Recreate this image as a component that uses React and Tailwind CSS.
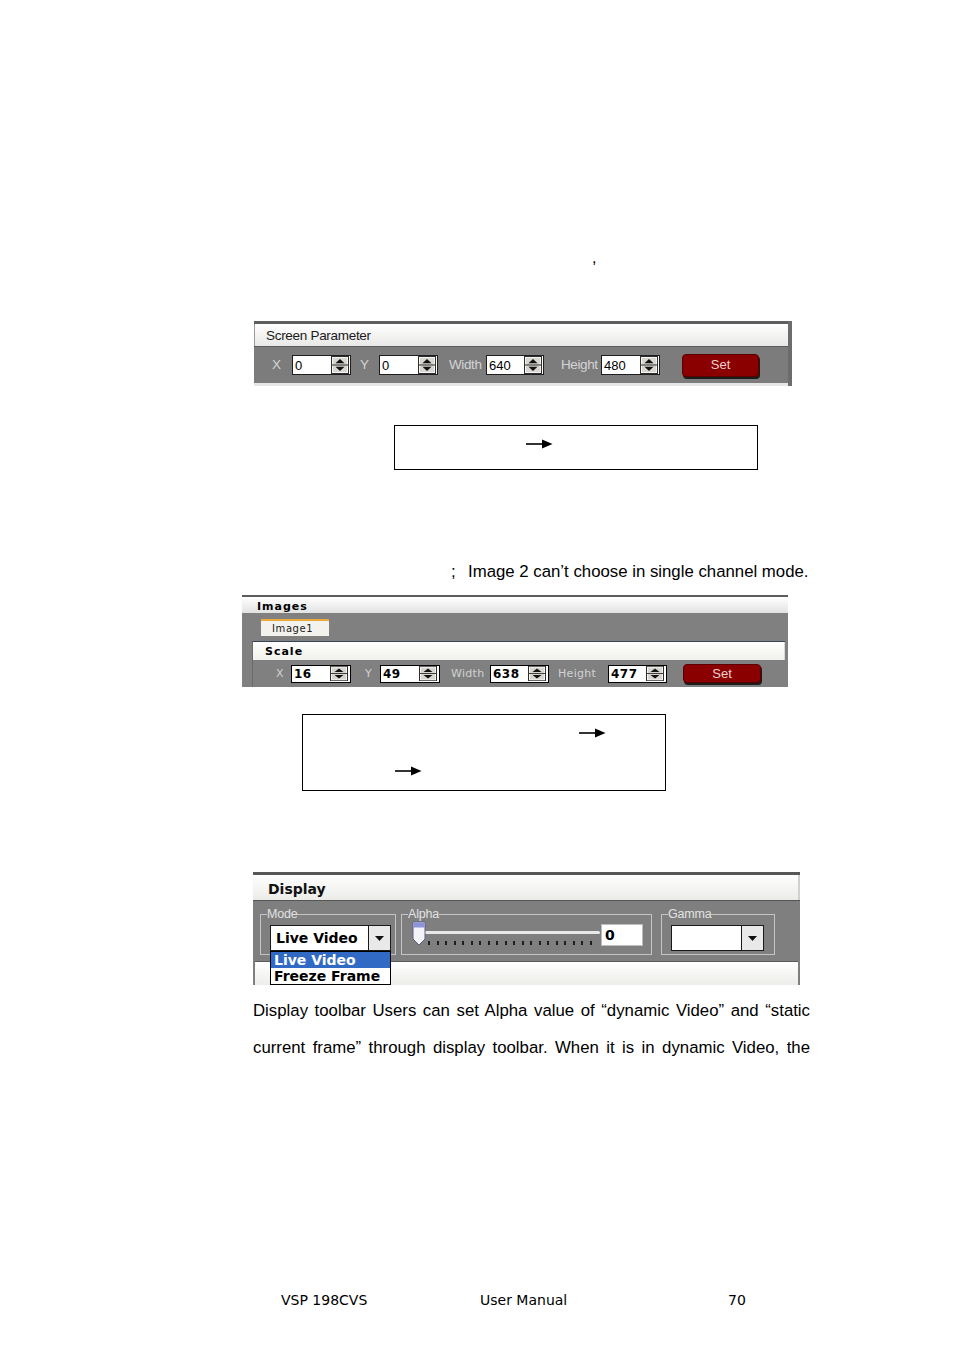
import React from "react";

const sans = "font-['Liberation_Sans',Arial,sans-serif]";
const verd = "font-['DejaVu_Sans',Verdana,sans-serif]";

function Spin({ h = 18 }) {
  return (
    <svg width="18" height={h} viewBox="0 0 18 18" preserveAspectRatio="none" className="shrink-0">
      <rect x="0.5" y="0.5" width="17" height="17" fill="#d9d6d0" stroke="#2e2e2e" />
      <rect x="1.5" y="1.5" width="15" height="15" fill="none" stroke="#f4f4f4" />
      <line x1="1" y1="9" x2="17" y2="9" stroke="#2e2e2e" />
      <path d="M4.5 7.2 L9 3 L13.5 7.2 Z" fill="#111" />
      <path d="M4.5 10.8 L13.5 10.8 L9 15 Z" fill="#111" />
    </svg>
  );
}

function Arrow() {
  return (
    <svg width="27" height="10" viewBox="0 0 27 10" className="block">
      <line x1="0" y1="5" x2="17" y2="5" stroke="#000" strokeWidth="1.6" />
      <path d="M16 0.5 L26.5 5 L16 9.5 Z" fill="#000" />
    </svg>
  );
}

function Caret() {
  return (
    <svg width="9" height="5" viewBox="0 0 9 5">
      <path d="M0 0 L9 0 L4.5 5 Z" fill="#111" />
    </svg>
  );
}

// row in the "Screen Parameter" bar
function Field1({ label, ml, lw, value, w }) {
  return (
    <>
      <span style={{ marginLeft: ml, width: lw }} className={`${sans} text-[13.5px] text-[#d4d4d4] shrink-0 leading-none tracking-[-0.4px]`}>
        {label}
      </span>
      <div style={{ width: w }} className="h-[20px] bg-white border border-[#1e1e1e] flex items-center justify-between pl-[2px] pr-[1px] shrink-0">
        <span className={`${sans} text-[13px] leading-none text-black`}>{value}</span>
        <Spin />
      </div>
    </>
  );
}

// row in the "Scale" bar
function Field2({ label, ml, lw, value, w }) {
  return (
    <>
      <span style={{ marginLeft: ml, width: lw }} className={`${verd} text-[11px] text-[#d2d2d2] shrink-0 leading-none tracking-[0.3px]`}>
        {label}
      </span>
      <div style={{ width: w }} className="h-[18px] bg-white border border-black flex items-center justify-between pl-[2px] pr-[2px] shrink-0">
        <span className={`${verd} text-[12px] font-bold leading-none text-black tracking-[0.5px]`}>{value}</span>
        <Spin h={15} />
      </div>
    </>
  );
}

function SetButton({ ml, w, h }) {
  return (
    <div
      style={{ marginLeft: ml, width: w, height: h }}
      className={`${sans} shrink-0 rounded-[4px] bg-[#8a0000] border border-[#5a0000] shadow-[1px_2px_0_#1c1c1c] flex items-center justify-center text-[13px] text-[#ecd2d2]`}
    >
      Set
    </div>
  );
}

function ScreenParameter() {
  return (
    <div className="ml-[254px] w-[538px] h-[65px] flex bg-[#7b7b7b]">
      <div className="w-[534px] flex flex-col">
        <div className="h-[3px] bg-[#5e5e5e]" />
        <div className="h-[22px] bg-gradient-to-b from-[#ffffff] to-[#e8e8e6] border-l border-[#9a9a9a] flex items-center pl-[11px] pt-[3px]">
          <span className={`${sans} text-[13.5px] text-[#1a1a1a] tracking-[-0.3px]`}>Screen Parameter</span>
        </div>
        <div className="h-[37px] border-t border-[#5a5a5a] bg-[#7c7c7c] flex items-center">
          <Field1 label="X" ml={18} lw={20} value="0" w={59} />
          <Field1 label="Y" ml={9} lw={19} value="0" w={59} />
          <Field1 label="Width" ml={11} lw={37} value="640" w={58} />
          <Field1 label="Height" ml={17} lw={40} value="480" w={59} />
          <SetButton ml={22} w={77} h={23} />
        </div>
        <div className="h-[3px] bg-[#e6e6e6]" />
      </div>
      <div className="w-[4px] bg-[#6c6c6c]" />
    </div>
  );
}

function ImagesPanel() {
  return (
    <div className="ml-[242px] w-[546px] h-[92px] bg-[#808080] flex flex-col overflow-hidden">
      <div className="h-[2px] bg-[#5c5c5c]" />
      <div className="h-[16px] bg-gradient-to-b from-[#ffffff] to-[#e2e2e2] flex items-center pl-[15px] pt-[2px]">
        <span className={`${verd} text-[11px] font-bold tracking-[1px] text-black leading-none`}>Images</span>
      </div>
      <div className="h-[6px]" />
      <div className="ml-[19px] w-[68px] h-[17px] bg-[#f3f2ec] border-t-2 border-[#eaa93a] flex items-center pl-[11px]">
        <span className={`${verd} text-[10px] tracking-[0.6px] text-[#222] leading-none`}>Image1</span>
      </div>
      <div className="h-[5px]" />
      <div className="ml-[10px] w-[533px] flex flex-col border-t border-[#34455a] border-l border-l-[#6a6a6a]">
        <div className="h-[18px] bg-gradient-to-b from-[#ffffff] to-[#f0f0ec] border-r border-[#d8d8d8] flex items-center pl-[12px]">
          <span className={`${verd} text-[11px] font-bold tracking-[1px] text-black leading-none`}>Scale</span>
        </div>
        <div className="h-[27px] bg-[#808080] flex items-center">
          <Field2 label="X" ml={23} lw={15} value="16" w={60} />
          <Field2 label="Y" ml={14} lw={15} value="49" w={60} />
          <Field2 label="Width" ml={11} lw={39} value="638" w={59} />
          <Field2 label="Height" ml={9} lw={50} value="477" w={59} />
          <SetButton ml={16} w={78} h={19} />
        </div>
      </div>
    </div>
  );
}

function Select({ w, value }) {
  return (
    <div style={{ width: w }} className="h-[26px] bg-white border border-[#1a1a1a] flex">
      <div className={`${verd} flex-1 flex items-center pl-[5px] text-[14px] font-bold text-black leading-none`}>{value}</div>
      <div className="w-[22px] border-l border-[#1a1a1a] bg-[#e9e9e9] flex items-center justify-center">
        <Caret />
      </div>
    </div>
  );
}

function Legend({ children }) {
  return (
    <legend className={`${sans} ml-[6px] px-0 text-[12.5px] leading-[14px] text-[#e2e2e2] tracking-[-0.2px]`}>{children}</legend>
  );
}

function DisplayPanel() {
  const ticks = Array.from({ length: 20 }, (_, i) => i);
  return (
    <div className="ml-[253px] w-[547px] h-[113px] bg-[#7f7f7f] flex flex-col">
      <div className="h-[3px] bg-[#575757]" />
      <div className="h-[25px] bg-gradient-to-b from-[#ffffff] to-[#ebebe8] border-r-2 border-[#d0d0d0] flex items-center pl-[15px] pt-[2px]">
        <span className={`${verd} text-[14px] font-bold text-[#111] leading-none`}>Display</span>
      </div>
      <div className="h-[61px] border-t border-[#555] flex items-start pt-[6px]">
        <fieldset className="ml-[7px] w-[136px] h-[48px] border border-[#c4c4c4]">
          <Legend>Mode</Legend>
          <div className="relative mt-[4px] ml-[9px]">
            <Select w={121} value="Live Video" />
            <div className={`${verd} absolute left-0 top-[26px] z-10 w-[121px] h-[34px] bg-white border border-black flex flex-col text-[14px] font-bold leading-none`}>
              <div className="h-[16px] bg-[#316ac5] text-white flex items-center pl-[3px]">Live Video</div>
              <div className="h-[16px] text-black flex items-center pl-[3px]">Freeze Frame</div>
            </div>
          </div>
        </fieldset>
        <fieldset className="ml-[5px] w-[251px] h-[48px] border border-[#c4c4c4]">
          <Legend>Alpha</Legend>
          <div className="flex items-start ml-[10px]">
            <div className="relative w-[188px] h-[27px]">
              <div className="absolute left-[12px] top-[10px] w-[176px] h-[3px] bg-[#e8e8e8] rounded-full" />
              <div className="absolute left-[16px] top-[20px] flex gap-[6.5px]">
                {ticks.map((t) => (
                  <div key={t} className="w-[2px] h-[4px] bg-[#1e1e1e]" />
                ))}
              </div>
              <svg width="14" height="25" viewBox="0 0 14 25" className="absolute left-0 top-0">
                <path d="M1 1 H13 V18 L7 24 L1 18 Z" fill="#f4f4f8" stroke="#5b5f8a" />
                <rect x="1.5" y="1.5" width="11" height="5" fill="#8c93d8" />
              </svg>
            </div>
            <div className={`${verd} mt-[3px] ml-[1px] w-[42px] h-[22px] bg-white border border-[#bdbdbd] flex items-center pl-[3px] text-[14px] font-bold text-black leading-none`}>
              0
            </div>
          </div>
        </fieldset>
        <fieldset className="ml-[9px] w-[114px] h-[48px] border border-[#c4c4c4]">
          <Legend>Gamma</Legend>
          <div className="mt-[4px] ml-[9px]">
            <Select w={93} value="" />
          </div>
        </fieldset>
      </div>
      <div className="ml-[2px] mr-[2px] h-[24px] bg-gradient-to-b from-[#ffffff] to-[#ededea] border-t border-[#5a5a5a]" />
    </div>
  );
}

export default function App() {
  return (
    <div className={`${sans} w-[954px] h-[1350px] bg-white text-black overflow-hidden`}>
      <div className="h-[250px]" />
      <div className="h-[16px] pl-[592px] text-[16px] leading-[16px]">,</div>

      <div className="mt-[55px]">
        <ScreenParameter />
      </div>

      <div className="mt-[39px] ml-[394px] w-[364px] h-[45px] border border-black pl-[131px] pt-[13px]">
        <Arrow />
      </div>

      <div className="mt-[92px] h-[20px] flex items-center text-[16.8px] leading-[20px]">
        <span className="ml-[451px] w-[17px]">;</span>
        <span>Image 2 can’t choose in single channel mode.</span>
      </div>

      <div className="mt-[13px]">
        <ImagesPanel />
      </div>

      <div className="mt-[27px] ml-[302px] w-[364px] h-[77px] border border-black pt-[13px]">
        <div className="pl-[276px]">
          <Arrow />
        </div>
        <div className="pl-[92px] mt-[28px]">
          <Arrow />
        </div>
      </div>

      <div className="mt-[81px]">
        <DisplayPanel />
      </div>

      <div className="mt-[7px] ml-[253px] w-[557px] text-[16.8px] leading-[37px]">
        <p className="text-justify [text-align-last:justify]">
          Display toolbar Users can set Alpha value of “dynamic Video” and “static
        </p>
        <p className="text-justify [text-align-last:justify]">
          current frame” through display toolbar. When it is in dynamic Video, the
        </p>
      </div>

      <div className={`${verd} mt-[224px] h-[20px] flex items-center text-[14px] leading-[20px]`}>
        <span className="ml-[281px] w-[199px]">VSP 198CVS</span>
        <span className="w-[248px]">User Manual</span>
        <span>70</span>
      </div>
    </div>
  );
}
